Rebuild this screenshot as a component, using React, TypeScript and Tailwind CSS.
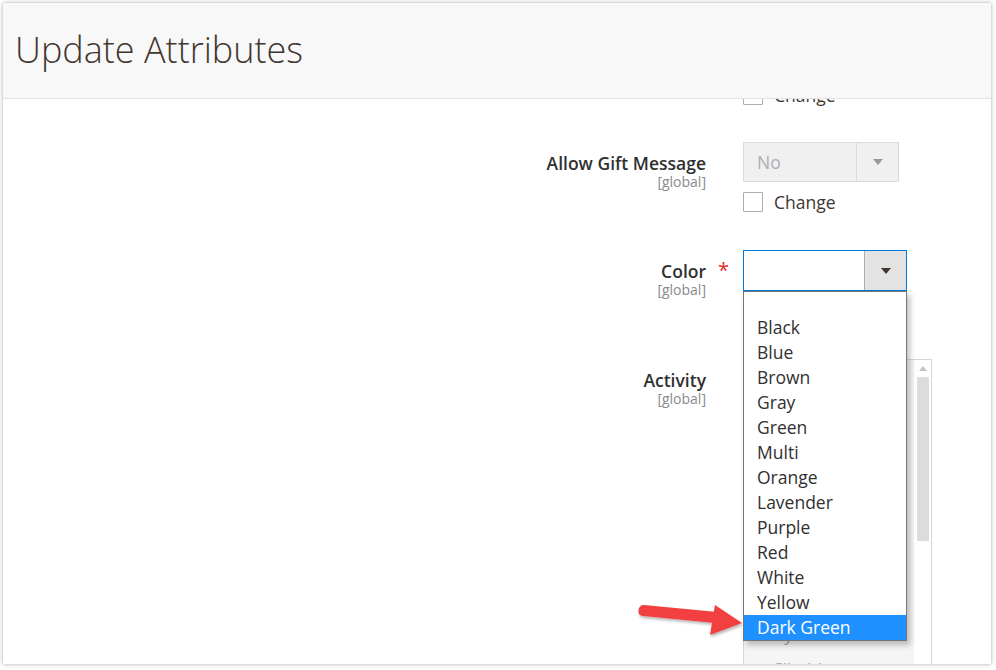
const colors = [
  "",
  "Black",
  "Blue",
  "Brown",
  "Gray",
  "Green",
  "Multi",
  "Orange",
  "Lavender",
  "Purple",
  "Red",
  "White",
  "Yellow",
  "Dark Green",
];

const activities = [
  "Hiking",
  "Outdoor",
  "Running",
  "Trail",
  "Travel",
  "Urban",
  "Recreation",
  "Gym",
  "Climbing",
];

function FieldLabel({ label, required }: { label: string; required?: boolean }) {
  return (
    <div className="relative flex flex-col items-end pt-[11px]">
      <span className="text-[17.5px] font-semibold leading-[21px] text-[#303030]">{label}</span>
      <span className="text-[14px] leading-[16px] text-[#8a8a8a]">[global]</span>
      {required && (
        <span className="absolute left-[calc(100%+12px)] top-[10px] text-[20px] leading-[20px] text-[#e22626]">
          *
        </span>
      )}
    </div>
  );
}

function Checkbox({ className = "" }: { className?: string }) {
  return (
    <label className={`flex items-center gap-[11px] ${className}`}>
      <span className="h-[20px] w-[20px] rounded-[1px] border border-[#adadad] bg-white" />
      <span className="text-[17.5px] leading-[22px] text-[#41362f]">Change</span>
    </label>
  );
}

export default function App() {
  return (
    <div
      className="h-[670px] w-[996px] overflow-hidden bg-white pl-[3px] pt-[3px]"
      style={{ fontFamily: '"Open Sans", "Noto Sans", sans-serif' }}
    >
      <div className="relative flex h-[661px] w-[988px] flex-col bg-white shadow-[0_0_4px_rgba(0,0,0,0.35)]">
        <header className="flex h-[96px] shrink-0 items-center border-b border-[#e3e3e3] bg-[#f8f8f8] pl-[12px]">
          <h1 className="pb-[2px] text-[36px] font-light leading-none text-[#41362f]">Update Attributes</h1>
        </header>

        <div className="relative flex-1 overflow-hidden">
          <div className="grid grid-cols-[703px_1fr] gap-x-[37px]">
            {/* row scrolled under the header */}
            <div />
            <Checkbox className="-mt-[15px]" />

            <div className="mt-[36px]">
              <FieldLabel label="Allow Gift Message" />
            </div>
            <div className="mt-[36px] flex flex-col">
              <div className="flex h-[40px] w-[156px] border border-[#dadada] bg-[#f0f0f0]">
                <span className="flex flex-1 items-center pl-[13px] text-[17.5px] text-[#adadad]">No</span>
                <span className="flex w-[42px] items-center justify-center border-l border-[#dadada]">
                  <span className="h-0 w-0 border-x-[5px] border-t-[6px] border-x-transparent border-t-[#9a9a9a]" />
                </span>
              </div>
              <Checkbox className="mt-[9px]" />
            </div>

            <div className="mt-[37px]">
              <FieldLabel label="Color" required />
            </div>
            <div className="relative mt-[37px] w-[164px]">
              <div className="flex h-[41px] w-[164px] border border-[#007bdb] bg-white">
                <span className="flex-1" />
                <span className="flex w-[42px] items-center justify-center border-l border-[#adadad] bg-[#e3e3e3]">
                  <span className="h-0 w-0 border-x-[5px] border-t-[6px] border-x-transparent border-t-[#41362f]" />
                </span>
              </div>

              <ul className="absolute left-0 top-[41px] z-10 w-[164px] border border-[#767676] bg-white shadow-[3px_4px_6px_rgba(0,0,0,0.25)]">
                {colors.map((c, i) => (
                  <li
                    key={i}
                    className={`flex items-center pl-[13px] text-[17.5px] ${i === 0 ? "h-[23px]" : "h-[25px]"} ${
                      c === "Dark Green" ? "bg-[#1e90ff] text-white" : "text-[#303030]"
                    }`}
                  >
                    {c}
                  </li>
                ))}
              </ul>
            </div>

            <div className="mt-[61px]">
              <FieldLabel label="Activity" />
            </div>
            <div className="mt-[61px] flex h-[320px] w-[189px] border border-[#d6d6d6] bg-white">
              <ul className="flex-1 bg-[#f5f5f5] pl-[28px] pt-[20px]">
                {activities.map((a) => (
                  <li key={a} className="flex h-[34px] items-center text-[17px] text-[#a6a6a6]">
                    {a}
                  </li>
                ))}
              </ul>
              <div className="flex w-[17px] flex-col items-center bg-white pt-[6px]">
                <span className="h-0 w-0 border-x-[4px] border-b-[5px] border-x-transparent border-b-[#c2c2c2]" />
                <span className="mt-[6px] h-[164px] w-[12px] bg-[#dcdcdc]" />
              </div>
            </div>
          </div>
        </div>

        {/* red annotation arrow */}
        <svg
          className="pointer-events-none absolute left-[630px] top-[592px] z-20"
          width="120"
          height="50"
          viewBox="0 0 120 50"
        >
          <defs>
            <filter id="sh" x="-20%" y="-20%" width="140%" height="160%">
              <feDropShadow dx="1" dy="2" stdDeviation="1.5" floodColor="#000" floodOpacity="0.3" />
            </filter>
          </defs>
          <g filter="url(#sh)" fill="#f2403f">
            <path d="M11 10 L84 17 L82 28 L10 21 Q5 20.5 5.5 15.5 Q6 10 11 10 Z" />
            <path d="M82 10 L109 28 L77 40 Z" />
          </g>
        </svg>
      </div>
    </div>
  );
}
